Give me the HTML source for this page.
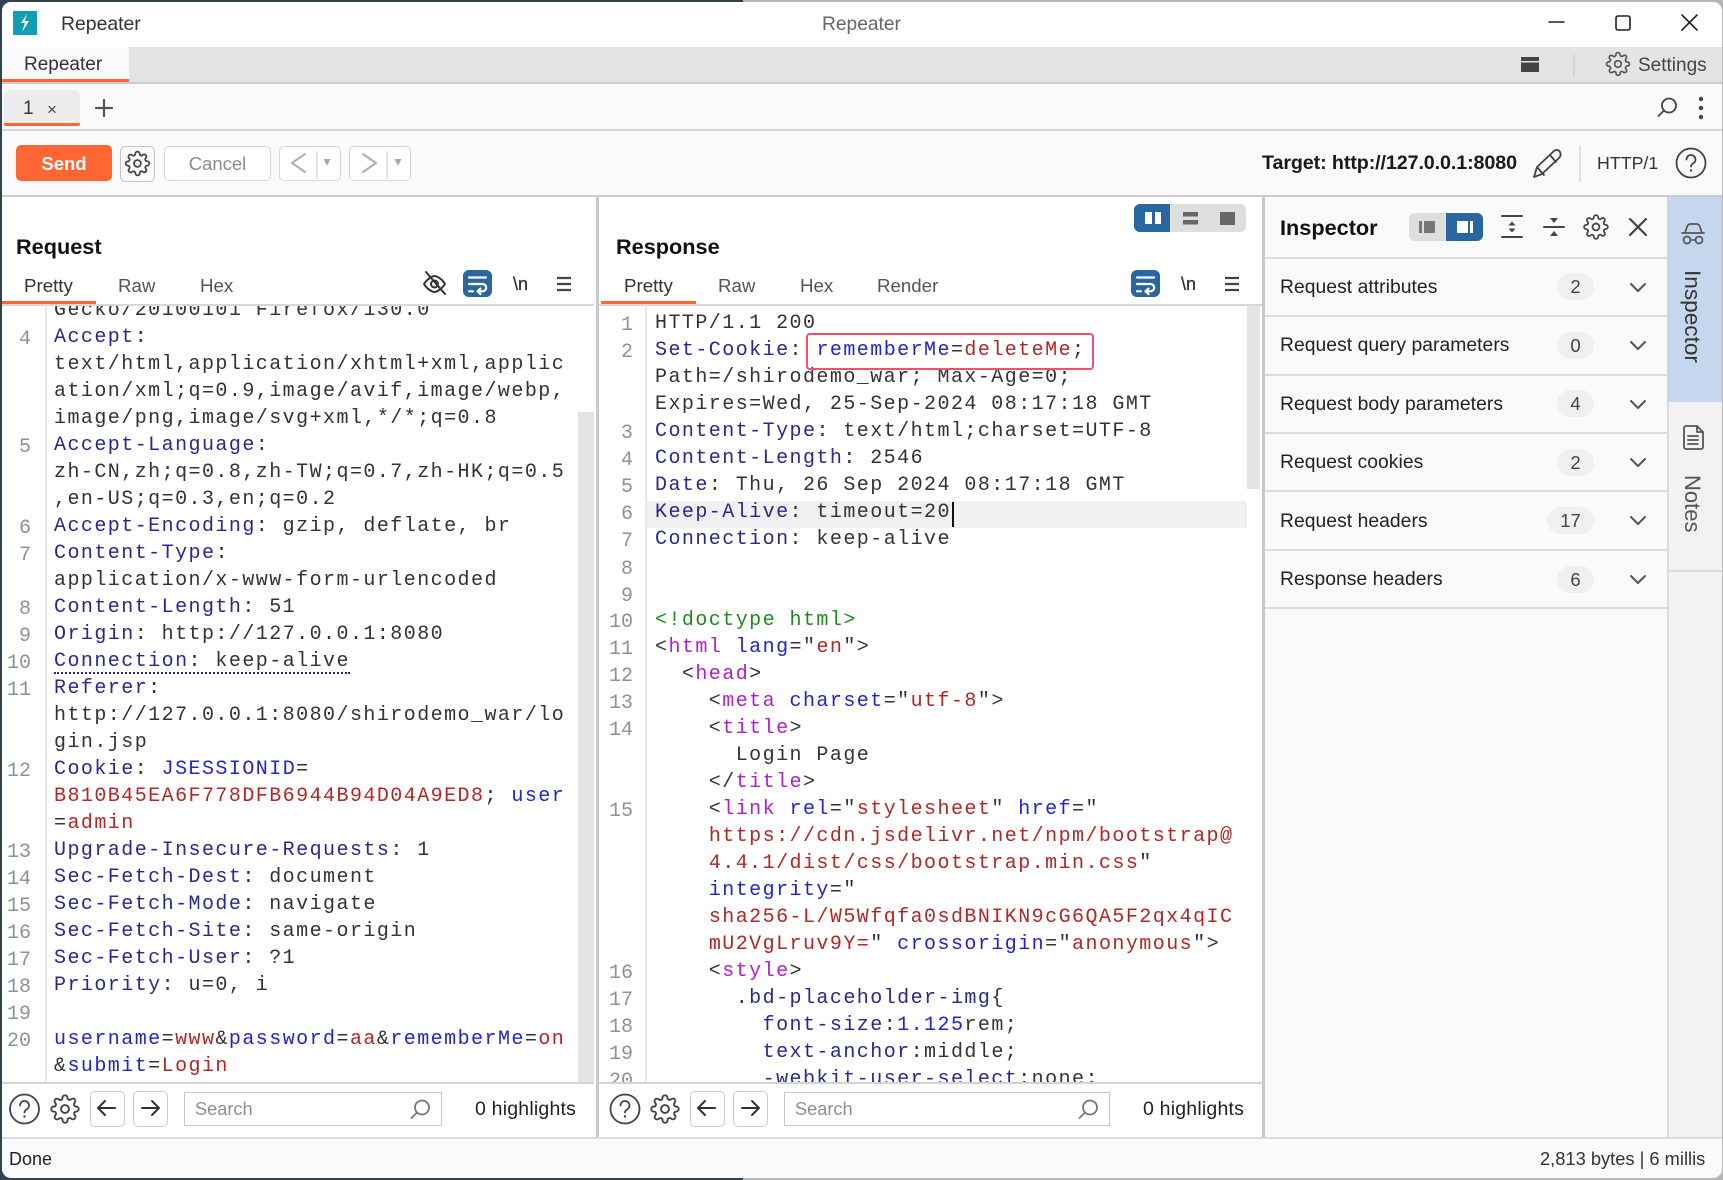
<!DOCTYPE html>
<html lang="en"><head><meta charset="utf-8"><title>Repeater</title>
<style>
html,body{margin:0;padding:0;width:1723px;height:1180px;overflow:hidden;background:#b5b5b5}
#dark1{position:absolute;left:0;top:0;width:743px;height:3px;background:#33424f}
#dark2{position:absolute;left:0;top:1176px;width:743px;height:4px;background:#33424f}
#dark3{position:absolute;left:0;top:0;width:10px;height:1180px;background:#33424f}
#w{position:absolute;left:2px;top:2px;width:1720px;height:1176px;border-radius:9px;background:#fafafa;overflow:hidden;filter:blur(.35px)}
#in{position:absolute;left:-2px;top:-2px;width:1723px;height:1180px;font-family:"Liberation Sans",sans-serif;color:#222}
.r{position:absolute}
.t{position:absolute;white-space:nowrap;line-height:30px;height:30px}
.code{position:absolute;overflow:hidden;background:#fff;font-family:"Liberation Mono",monospace;font-size:20px;letter-spacing:1.45px;color:#333}
.l{position:absolute;left:0;height:27px;line-height:27px;white-space:pre;margin-top:1.5px}
.n{position:absolute;color:#8b9298;font-size:20px;letter-spacing:0;width:40px;text-align:right;height:27px;line-height:27px;font-family:"Liberation Mono",monospace;margin-top:3px}
.h{color:#28288f}.b{color:#2323d2}.d{color:#b32626}.m{color:#b01ed2}.g{color:#1f8a1f}
.tab{font-size:18.7px;color:#555}
.ins{font-size:19.3px;letter-spacing:.05px;color:#222;left:1280px}
.bd{position:absolute;height:27px;line-height:27px;border-radius:14px;background:#f0f0f0;font-size:18.5px;color:#444;text-align:center}
svg{position:absolute;left:0;top:0}
</style></head><body>
<div id="dark1"></div><div id="dark2"></div><div id="dark3"></div>
<div id="w"><div id="in">

<!-- title bar -->
<div class="r" style="left:0;top:0;width:1723px;height:47px;background:#fff"></div>
<div class="t" style="left:61px;top:9px;font-size:19.4px;color:#333">Repeater</div>
<div class="t" style="left:822px;top:10px;font-size:19.2px;color:#666">Repeater</div>

<!-- tab bar -->
<div class="r" style="left:0;top:47px;width:1723px;height:35px;background:#e4e4e4;border-bottom:2px solid #ccc"></div>
<div class="r" style="left:0;top:47px;width:129px;height:32px;background:#fafafa;border-bottom:3px solid #ff6633"></div>
<div class="t" style="left:24px;top:50px;font-size:19px;color:#333">Repeater</div>
<div class="t" style="left:1638px;top:51px;font-size:19px;color:#444">Settings</div>

<!-- sub tabs -->
<div class="r" style="left:0;top:129px;width:1723px;height:2px;background:#d6d6d6"></div>
<div class="r" style="left:4px;top:90px;width:76px;height:33px;background:#ececec;border-radius:6px 6px 2px 2px;border-bottom:3px solid #ff6633"></div>
<div class="t" style="left:23px;top:94px;font-size:19px;color:#333">1</div>
<div class="t" style="left:47px;top:95px;font-size:17px;color:#444">×</div>

<!-- toolbar -->
<div class="r" style="left:0;top:195px;width:1723px;height:2px;background:#ccc"></div>
<div class="r" style="left:16px;top:145px;width:96px;height:36px;background:#ff6633;border-radius:5px"></div>
<div class="t" style="left:16px;top:149px;width:96px;text-align:center;font-size:18.5px;font-weight:bold;color:#fff">Send</div>
<div class="r" style="left:120px;top:146px;width:33px;height:34px;border:1.5px solid #c4c4c4;border-radius:5px;background:#fafafa"></div>
<div class="r" style="left:164px;top:146px;width:105px;height:33px;border:1.5px solid #d8d8d8;border-radius:5px;background:#fff"></div>
<div class="t" style="left:164px;top:149px;width:107px;text-align:center;font-size:18.5px;color:#8c8c8c">Cancel</div>
<div class="r" style="left:279px;top:146px;width:60px;height:33px;border:1.5px solid #d8d8d8;border-radius:5px;background:#fff"></div>
<div class="r" style="left:349px;top:146px;width:60px;height:33px;border:1.5px solid #d8d8d8;border-radius:5px;background:#fff"></div>
<div class="t" style="left:1262px;top:148px;font-size:19.7px;font-weight:bold;color:#1a1a1a;letter-spacing:-.1px">Target: http://127.0.0.1:8080</div>
<div class="t" style="left:1597px;top:148px;font-size:17.8px;color:#333">HTTP/1</div>

<!-- main panels -->
<div class="r" style="left:0;top:197px;width:1262px;height:885px;background:#fff"></div>
<div class="r" style="left:596px;top:197px;width:3px;height:941px;background:#c9c9c9"></div>
<div class="r" style="left:1262px;top:197px;width:3px;height:941px;background:#c9c9c9"></div>

<!-- Request -->
<div class="t" style="left:16px;top:232px;font-size:21.7px;font-weight:bold;color:#111">Request</div>
<div class="t tab" style="left:24px;top:271px;color:#333">Pretty</div>
<div class="t tab" style="left:118px;top:271px">Raw</div>
<div class="t tab" style="left:200px;top:271px">Hex</div>
<div class="r" style="left:1px;top:301px;width:95px;height:3px;background:#ff6633"></div>
<div class="r" style="left:0;top:304px;width:594px;height:2px;background:#d8d8d8"></div>
<div class="t" style="left:513px;top:269px;font-size:18px;color:#333;-webkit-text-stroke:.3px #333">\n</div>

<div class="code" style="left:0;top:306px;width:578px;height:776px">
<div class="r" style="left:45px;top:0;width:2px;height:776px;background:#e8e8e8"></div>
<div class="l" style="left:54px;top:-10.5px">Gecko/20100101 Firefox/130.0</div>
<div class="n" style="left:-9px;top:16.5px">4</div><div class="l" style="left:54px;top:16.5px"><span class="h">Accept</span>:</div>
<div class="l" style="left:54px;top:43.5px">text/html,application/xhtml+xml,applic</div>
<div class="l" style="left:54px;top:70.5px">ation/xml;q=0.9,image/avif,image/webp,</div>
<div class="l" style="left:54px;top:97.5px">image/png,image/svg+xml,*/*;q=0.8</div>
<div class="n" style="left:-9px;top:124.5px">5</div><div class="l" style="left:54px;top:124.5px"><span class="h">Accept-Language</span>:</div>
<div class="l" style="left:54px;top:151.5px">zh-CN,zh;q=0.8,zh-TW;q=0.7,zh-HK;q=0.5</div>
<div class="l" style="left:54px;top:178.5px">,en-US;q=0.3,en;q=0.2</div>
<div class="n" style="left:-9px;top:205.5px">6</div><div class="l" style="left:54px;top:205.5px"><span class="h">Accept-Encoding</span>: gzip, deflate, br</div>
<div class="n" style="left:-9px;top:232.5px">7</div><div class="l" style="left:54px;top:232.5px"><span class="h">Content-Type</span>:</div>
<div class="l" style="left:54px;top:259.5px">application/x-www-form-urlencoded</div>
<div class="n" style="left:-9px;top:286.5px">8</div><div class="l" style="left:54px;top:286.5px"><span class="h">Content-Length</span>: 51</div>
<div class="n" style="left:-9px;top:313.5px">9</div><div class="l" style="left:54px;top:313.5px"><span class="h">Origin</span>: http://127.0.0.1:8080</div>
<div class="n" style="left:-9px;top:340.5px">10</div><div class="l" style="left:54px;top:340.5px;height:23.500px;border-bottom:2px dotted #2323a0"><span class="h">Connection</span>: keep-alive</div>
<div class="n" style="left:-9px;top:367.5px">11</div><div class="l" style="left:54px;top:367.5px"><span class="h">Referer</span>:</div>
<div class="l" style="left:54px;top:394.5px">http://127.0.0.1:8080/shirodemo_war/lo</div>
<div class="l" style="left:54px;top:421.5px">gin.jsp</div>
<div class="n" style="left:-9px;top:448.5px">12</div><div class="l" style="left:54px;top:448.5px"><span class="h">Cookie</span>: <span class="b">JSESSIONID</span>=</div>
<div class="l" style="left:54px;top:475.5px"><span class="d">B810B45EA6F778DFB6944B94D04A9ED8</span>; <span class="b">user</span></div>
<div class="l" style="left:54px;top:502.5px">=<span class="d">admin</span></div>
<div class="n" style="left:-9px;top:529.5px">13</div><div class="l" style="left:54px;top:529.5px"><span class="h">Upgrade-Insecure-Requests</span>: 1</div>
<div class="n" style="left:-9px;top:556.5px">14</div><div class="l" style="left:54px;top:556.5px"><span class="h">Sec-Fetch-Dest</span>: document</div>
<div class="n" style="left:-9px;top:583.5px">15</div><div class="l" style="left:54px;top:583.5px"><span class="h">Sec-Fetch-Mode</span>: navigate</div>
<div class="n" style="left:-9px;top:610.5px">16</div><div class="l" style="left:54px;top:610.5px"><span class="h">Sec-Fetch-Site</span>: same-origin</div>
<div class="n" style="left:-9px;top:637.5px">17</div><div class="l" style="left:54px;top:637.5px"><span class="h">Sec-Fetch-User</span>: ?1</div>
<div class="n" style="left:-9px;top:664.5px">18</div><div class="l" style="left:54px;top:664.5px"><span class="h">Priority</span>: u=0, i</div>
<div class="n" style="left:-9px;top:691.5px">19</div>
<div class="n" style="left:-9px;top:718.5px">20</div><div class="l" style="left:54px;top:718.5px"><span class="b">username</span>=<span class="d">www</span>&amp;<span class="b">password</span>=<span class="d">aa</span>&amp;<span class="b">rememberMe</span>=<span class="d">on</span></div>
<div class="l" style="left:54px;top:745.5px">&amp;<span class="b">submit</span>=<span class="d">Login</span></div>
</div>
<div class="r" style="left:578px;top:412px;width:16px;height:670px;background:#e4e4e4"></div>

<!-- Response -->
<div class="t" style="left:616px;top:232px;font-size:21.7px;font-weight:bold;color:#111">Response</div>
<div class="t tab" style="left:624px;top:271px;color:#333">Pretty</div>
<div class="t tab" style="left:718px;top:271px">Raw</div>
<div class="t tab" style="left:800px;top:271px">Hex</div>
<div class="t tab" style="left:877px;top:271px">Render</div>
<div class="r" style="left:601px;top:301px;width:95px;height:3px;background:#ff6633"></div>
<div class="r" style="left:599px;top:304px;width:663px;height:2px;background:#d8d8d8"></div>
<div class="t" style="left:1181px;top:269px;font-size:18px;color:#333;-webkit-text-stroke:.3px #333">\n</div>
<div class="r" style="left:1134px;top:204px;width:112px;height:28px;background:#dedede;border-radius:6px"></div>
<div class="r" style="left:1134px;top:204px;width:36px;height:28px;background:#2a66a0;border-radius:6px 0 0 6px"></div>

<div class="code" style="left:599px;top:306px;width:648px;height:776px">
<div class="r" style="left:46px;top:0;width:2px;height:776px;background:#e8e8e8"></div>
<div class="r" style="left:48px;top:194.5px;width:600px;height:27px;background:#f0f0f0"></div>
<div class="n" style="left:-6px;top:2.5px">1</div><div class="l" style="left:56px;top:2.5px">HTTP/1.1 200</div>
<div class="n" style="left:-6px;top:29.5px">2</div><div class="l" style="left:56px;top:29.5px"><span class="h">Set-Cookie</span>: <span class="b">rememberMe</span>=<span class="d">deleteMe</span>;</div>
<div class="l" style="left:56px;top:56.5px">Path=/shirodemo_war; Max-Age=0;</div>
<div class="l" style="left:56px;top:83.5px">Expires=Wed, 25-Sep-2024 08:17:18 GMT</div>
<div class="n" style="left:-6px;top:110.5px">3</div><div class="l" style="left:56px;top:110.5px"><span class="h">Content-Type</span>: text/html;charset=UTF-8</div>
<div class="n" style="left:-6px;top:137.5px">4</div><div class="l" style="left:56px;top:137.5px"><span class="h">Content-Length</span>: 2546</div>
<div class="n" style="left:-6px;top:164.5px">5</div><div class="l" style="left:56px;top:164.5px"><span class="h">Date</span>: Thu, 26 Sep 2024 08:17:18 GMT</div>
<div class="n" style="left:-6px;top:191.5px">6</div><div class="l" style="left:56px;top:191.5px"><span class="h">Keep-Alive</span>: timeout=20</div>
<div class="r" style="left:353px;top:196px;width:2px;height:25px;background:#111"></div>
<div class="n" style="left:-6px;top:218.5px">7</div><div class="l" style="left:56px;top:218.5px"><span class="h">Connection</span>: keep-alive</div>
<div class="n" style="left:-6px;top:246.5px">8</div>
<div class="n" style="left:-6px;top:273.5px">9</div>
<div class="n" style="left:-6px;top:299.5px">10</div><div class="l" style="left:56px;top:299.5px"><span class="g">&lt;!doctype html&gt;</span></div>
<div class="n" style="left:-6px;top:326.5px">11</div><div class="l" style="left:56px;top:326.5px">&lt;<span class="m">html</span> <span class="b">lang</span>="<span class="d">en</span>"&gt;</div>
<div class="n" style="left:-6px;top:353.5px">12</div><div class="l" style="left:56px;top:353.5px">  &lt;<span class="m">head</span>&gt;</div>
<div class="n" style="left:-6px;top:380.5px">13</div><div class="l" style="left:56px;top:380.5px">    &lt;<span class="m">meta</span> <span class="b">charset</span>="<span class="d">utf-8</span>"&gt;</div>
<div class="n" style="left:-6px;top:407.5px">14</div><div class="l" style="left:56px;top:407.5px">    &lt;<span class="m">title</span>&gt;</div>
<div class="l" style="left:56px;top:434.5px">      Login Page</div>
<div class="l" style="left:56px;top:461.5px">    &lt;/<span class="m">title</span>&gt;</div>
<div class="n" style="left:-6px;top:488.5px">15</div><div class="l" style="left:56px;top:488.5px">    &lt;<span class="m">link</span> <span class="b">rel</span>="<span class="d">stylesheet</span>" <span class="b">href</span>="</div>
<div class="l" style="left:56px;top:515.5px">    <span class="d">https://cdn.jsdelivr.net/npm/bootstrap@</span></div>
<div class="l" style="left:56px;top:542.5px">    <span class="d">4.4.1/dist/css/bootstrap.min.css</span>"</div>
<div class="l" style="left:56px;top:569.5px">    <span class="b">integrity</span>="</div>
<div class="l" style="left:56px;top:596.5px">    <span class="d">sha256-L/W5Wfqfa0sdBNIKN9cG6QA5F2qx4qIC</span></div>
<div class="l" style="left:56px;top:623.5px">    <span class="d">mU2VgLruv9Y=</span>" <span class="b">crossorigin</span>="<span class="d">anonymous</span>"&gt;</div>
<div class="n" style="left:-6px;top:650.5px">16</div><div class="l" style="left:56px;top:650.5px">    &lt;<span class="m">style</span>&gt;</div>
<div class="n" style="left:-6px;top:677.5px">17</div><div class="l" style="left:56px;top:677.5px">      <span class="h">.bd-placeholder-img</span>{</div>
<div class="n" style="left:-6px;top:704.5px">18</div><div class="l" style="left:56px;top:704.5px">        <span class="h">font-size</span>:<span class="b">1.125</span>rem;</div>
<div class="n" style="left:-6px;top:731.5px">19</div><div class="l" style="left:56px;top:731.5px">        <span class="h">text-anchor</span>:middle;</div>
<div class="n" style="left:-6px;top:758.5px">20</div><div class="l" style="left:56px;top:758.5px">        <span class="h">-webkit-user-select</span>:none;</div>
</div>
<div class="r" style="left:1247px;top:306px;width:13px;height:183px;background:#e4e4e4"></div>
<div class="r" style="left:806px;top:333px;width:284px;height:33px;border:2.5px solid #f0506e;border-radius:4px"></div>

<!-- bottom bars -->
<div class="r" style="left:0;top:1082px;width:594px;height:2px;background:#d4d4d4"></div>
<div class="r" style="left:599px;top:1082px;width:663px;height:2px;background:#d4d4d4"></div>
<div class="r" style="left:0;top:1084px;width:596px;height:53px;background:#fff"></div>
<div class="r" style="left:599px;top:1084px;width:663px;height:53px;background:#fff"></div>
<div class="r" style="left:90px;top:1091px;width:33px;height:34px;border:1.5px solid #ccc;border-radius:5px"></div>
<div class="r" style="left:133px;top:1091px;width:33px;height:34px;border:1.5px solid #ccc;border-radius:5px"></div>
<div class="r" style="left:184px;top:1092px;width:256px;height:32px;border:1.5px solid #c8c8c8"></div>
<div class="t" style="left:195px;top:1094px;font-size:18.2px;color:#8f8f8f">Search</div>
<div class="t" style="left:475px;top:1094px;font-size:19.5px;letter-spacing:.2px;color:#222">0 highlights</div>
<div class="r" style="left:690px;top:1091px;width:33px;height:34px;border:1.5px solid #ccc;border-radius:5px"></div>
<div class="r" style="left:733px;top:1091px;width:33px;height:34px;border:1.5px solid #ccc;border-radius:5px"></div>
<div class="r" style="left:784px;top:1092px;width:324px;height:32px;border:1.5px solid #c8c8c8"></div>
<div class="t" style="left:795px;top:1094px;font-size:18.2px;color:#8f8f8f">Search</div>
<div class="t" style="left:1143px;top:1094px;font-size:19.5px;letter-spacing:.2px;color:#222">0 highlights</div>

<!-- Inspector -->
<div class="t" style="left:1280px;top:213px;font-size:21.7px;font-weight:bold;color:#111">Inspector</div>
<div class="r" style="left:1409px;top:213px;width:74px;height:28px;background:#dedede;border-radius:6px"></div>
<div class="r" style="left:1446px;top:213px;width:37px;height:28px;background:#2a66a0;border-radius:0 6px 6px 0"></div>
<div class="r" style="left:1265px;top:257px;width:402px;height:2px;background:#dcdcdc"></div>
<div class="r" style="left:1265px;top:315px;width:402px;height:2px;background:#dcdcdc"></div>
<div class="r" style="left:1265px;top:374px;width:402px;height:2px;background:#dcdcdc"></div>
<div class="r" style="left:1265px;top:432px;width:402px;height:2px;background:#dcdcdc"></div>
<div class="r" style="left:1265px;top:490px;width:402px;height:2px;background:#dcdcdc"></div>
<div class="r" style="left:1265px;top:549px;width:402px;height:2px;background:#dcdcdc"></div>
<div class="r" style="left:1265px;top:607px;width:402px;height:2px;background:#dcdcdc"></div>
<div class="t ins" style="top:272.5px">Request attributes</div>
<div class="t ins" style="top:331px">Request query parameters</div>
<div class="t ins" style="top:389.5px">Request body parameters</div>
<div class="t ins" style="top:448px">Request cookies</div>
<div class="t ins" style="top:506.5px">Request headers</div>
<div class="t ins" style="top:565px">Response headers</div>
<div class="bd" style="left:1557px;top:273px;width:37px">2</div>
<div class="bd" style="left:1557px;top:332px;width:37px">0</div>
<div class="bd" style="left:1557px;top:390px;width:37px">4</div>
<div class="bd" style="left:1557px;top:449px;width:37px">2</div>
<div class="bd" style="left:1547px;top:507px;width:47px">17</div>
<div class="bd" style="left:1557px;top:566px;width:37px">6</div>

<!-- side tabs -->
<div class="r" style="left:1667px;top:197px;width:56px;height:940px;background:#f3f1f3;border-left:2px solid #dcdcdc;box-sizing:border-box"></div>
<div class="r" style="left:1667px;top:197px;width:56px;height:205px;background:#c5d7ee"></div>
<div class="r" style="left:1669px;top:570px;width:54px;height:2px;background:#dcdcdc"></div>
<div class="t" style="left:1692px;top:270px;font-size:22.6px;color:#333;transform-origin:0 0;transform:rotate(90deg) translateY(-15px)">Inspector</div>
<div class="t" style="left:1692px;top:475px;font-size:22px;color:#555;transform-origin:0 0;transform:rotate(90deg) translateY(-15px)">Notes</div>

<!-- status bar -->
<div class="r" style="left:0;top:1137px;width:1723px;height:2px;background:#dcdcdc"></div>
<div class="t" style="left:9px;top:1144px;font-size:18px;color:#222">Done</div>
<div class="t" style="left:1540px;top:1144px;font-size:18.3px;color:#333">2,813 bytes | 6 millis</div>

<svg width="1723" height="1180" viewBox="0 0 1723 1180" fill="none" stroke-linecap="round" stroke-linejoin="round">
<defs>
<g id="gear" fill="none"><path d="M12 15.2a3.2 3.2 0 1 0 0-6.4 3.2 3.2 0 0 0 0 6.4z"/><path d="M19.4 15a1.65 1.65 0 0 0 .33 1.82l.06.06a2 2 0 0 1 0 2.83 2 2 0 0 1-2.83 0l-.06-.06a1.65 1.65 0 0 0-1.82-.33 1.65 1.65 0 0 0-1 1.51V21a2 2 0 0 1-2 2 2 2 0 0 1-2-2v-.09A1.65 1.65 0 0 0 9 19.4a1.65 1.65 0 0 0-1.82.33l-.06.06a2 2 0 0 1-2.83 0 2 2 0 0 1 0-2.83l.06-.06a1.65 1.65 0 0 0 .33-1.82 1.65 1.65 0 0 0-1.51-1H3a2 2 0 0 1-2-2 2 2 0 0 1 2-2h.09A1.65 1.65 0 0 0 4.6 9a1.65 1.65 0 0 0-.33-1.82l-.06-.06a2 2 0 0 1 0-2.83 2 2 0 0 1 2.83 0l.06.06a1.65 1.65 0 0 0 1.82.33H9a1.65 1.65 0 0 0 1-1.51V3a2 2 0 0 1 2-2 2 2 0 0 1 2 2v.09a1.65 1.65 0 0 0 1 1.51 1.65 1.65 0 0 0 1.82-.33l.06-.06a2 2 0 0 1 2.83 0 2 2 0 0 1 0 2.83l-.06.06a1.65 1.65 0 0 0-.33 1.82V9a1.65 1.65 0 0 0 1.51 1H21a2 2 0 0 1 2 2 2 2 0 0 1-2 2h-.09a1.65 1.65 0 0 0-1.51 1z"/></g>
<g id="help"><circle cx="16" cy="16" r="14.5" stroke-width="1.8"/><path d="M11.500 12.500a4.500 4.500 0 1 1 6.700 3.900c-1.400.8-2.200 1.500-2.200 3.100" stroke-width="1.8"/><circle cx="16" cy="23.500" r="1.200" fill="#444" stroke="none"/></g>
<g id="mag"><circle cx="12" cy="8.500" r="7" stroke-width="1.800"/><path d="M7 13.500L1.500 19" stroke-width="1.800"/></g>
<g id="chev"><path d="M-7 -4L0 3L7 -4" stroke-width="2"/></g>
<g id="wrap"><rect width="29" height="27" rx="6" fill="#2a66a0" stroke="none"/><path d="M6 7.500h17M6 14h13.500a3.500 3.500 0 0 1 0 7.300H15M17.500 18.500l-3 2.800 3 2.800M6 21.300h4" stroke="#fff" stroke-width="2.200"/></g>
<g id="ham"><path d="M0 0h14M0 6h14M0 12h14" stroke="#444" stroke-width="2.200" stroke-linecap="butt"/></g>
</defs>

<!-- logo -->
<rect x="13" y="11" width="24" height="24" fill="#0f9fb5"/>
<path d="M27 14l-6 9h4l-3 9 7-11h-4l2-7z" fill="#fff"/>

<!-- window controls -->
<path d="M1549 22h15" stroke="#222" stroke-width="1.6"/>
<rect x="1616" y="16" width="14" height="14" rx="2" stroke="#222" stroke-width="1.6"/>
<path d="M1682 15l15 15M1697 15l-15 15" stroke="#222" stroke-width="1.6"/>

<!-- tab bar right -->
<rect x="1521" y="57" width="18" height="4" fill="#444"/><rect x="1521" y="62.500" width="18" height="9.500" fill="#444"/>
<path d="M1574 55v20" stroke="#d0d0d0" stroke-width="1.500"/>
<use href="#gear" transform="translate(1605.500,51.500) scale(1.040)" stroke="#555" stroke-width="1.600"/>

<!-- subtab -->
<path d="M104 100v16M96 108h16" stroke="#555" stroke-width="2.200"/>
<use href="#mag" transform="translate(1657,97)" stroke="#444"/>
<circle cx="1701" cy="99" r="2.200" fill="#444"/><circle cx="1701" cy="108" r="2.200" fill="#444"/><circle cx="1701" cy="117" r="2.200" fill="#444"/>

<!-- toolbar icons -->
<use href="#gear" transform="translate(124.500,150.500) scale(1.080)" stroke="#444" stroke-width="1.600"/>
<path d="M305 154l-13 9 13 9" stroke="#b0b0b0" stroke-width="2"/>
<path d="M317 152v26" stroke="#dcdcdc" stroke-width="1.500"/>
<path d="M323.500 159h7l-3.500 7z" fill="#aaa"/>
<path d="M363 154l13 9-13 9" stroke="#b0b0b0" stroke-width="2"/>
<path d="M387 152v26" stroke="#dcdcdc" stroke-width="1.500"/>
<path d="M394.500 159h7l-3.500 7z" fill="#aaa"/>
<path d="M1534 177l3-10 17-16c2-2 5-1 6 1s1 4-1 6l-17 16z M1537 167l7 8M1550 155l6 7" stroke="#444" stroke-width="1.800"/>
<path d="M1580 146v35" stroke="#d8d8d8" stroke-width="1.500"/>
<use href="#help" transform="translate(1675,147)" stroke="#444"/>

<!-- request icons -->
<path d="M424 284c4-6 9-8 10.500-8s7 2 10.500 8c-4 6-9 8-10.500 8s-7-2-10.500-8z" stroke="#333" stroke-width="2"/>
<circle cx="434.500" cy="284" r="3.500" stroke="#333" stroke-width="2"/>
<path d="M426 272l19 22" stroke="#333" stroke-width="2"/>
<use href="#wrap" x="463" y="270"/>
<use href="#ham" x="557" y="278"/>

<!-- response icons -->
<use href="#wrap" x="1131" y="270"/>
<use href="#ham" x="1225" y="278"/>
<rect x="1145" y="212" width="7" height="12" fill="#fff"/><rect x="1155" y="212" width="6" height="12" fill="#fff"/>
<rect x="1183" y="212" width="15" height="4.500" fill="#666"/><rect x="1183" y="220" width="15" height="4.500" fill="#666"/>
<rect x="1220" y="212" width="15" height="13" fill="#666"/>

<!-- bottom icons request -->
<use href="#help" transform="translate(8.500,1093)" stroke="#444"/>
<use href="#gear" transform="translate(50,1094) scale(1.250)" stroke="#444" stroke-width="1.500"/>
<path d="M115 1108h-17M105 1101l-7 7 7 7" stroke="#333" stroke-width="2"/>
<path d="M142 1108h17M152 1101l7 7-7 7" stroke="#333" stroke-width="2"/>
<use href="#mag" transform="translate(410,1099)" stroke="#777"/>
<!-- bottom icons response -->
<use href="#help" transform="translate(609,1093)" stroke="#444"/>
<use href="#gear" transform="translate(650,1094) scale(1.250)" stroke="#444" stroke-width="1.500"/>
<path d="M715 1108h-17M705 1101l-7 7 7 7" stroke="#333" stroke-width="2"/>
<path d="M742 1108h17M752 1101l7 7-7 7" stroke="#333" stroke-width="2"/>
<use href="#mag" transform="translate(1078,1099)" stroke="#777"/>

<!-- inspector icons -->
<rect x="1419" y="221" width="3" height="12" fill="#777"/><rect x="1424" y="221" width="11" height="12" fill="#777"/>
<rect x="1457" y="221" width="11" height="12" fill="#fff"/><rect x="1470" y="221" width="3" height="12" fill="#fff"/>
<path d="M1502 216h20M1502 237h20" stroke="#444" stroke-width="2"/>
<path d="M1512 221.500l3.500 4h-7zM1512 232.500l3.500-4h-7z" fill="#444"/>
<path d="M1544 227h20" stroke="#444" stroke-width="2"/>
<path d="M1554 223l4-5h-8zM1554 231l4 5h-8z" fill="#444"/>
<use href="#gear" transform="translate(1583,214) scale(1.080)" stroke="#444" stroke-width="1.600"/>
<path d="M1630 219l16 16M1646 219l-16 16" stroke="#444" stroke-width="2.200"/>
<use href="#chev" x="1638" y="288" stroke="#555"/>
<use href="#chev" x="1638" y="346" stroke="#555"/>
<use href="#chev" x="1638" y="405" stroke="#555"/>
<use href="#chev" x="1638" y="463" stroke="#555"/>
<use href="#chev" x="1638" y="521" stroke="#555"/>
<use href="#chev" x="1638" y="580" stroke="#555"/>

<!-- side icons -->
<path d="M1682 233h22M1685 233l2-6c.5-2 2-3 3-3h7c1 0 2.500 1 3 3l2 6" stroke="#555" stroke-width="1.700"/>
<circle cx="1687" cy="240" r="3.500" stroke="#555" stroke-width="1.700"/><circle cx="1699" cy="240" r="3.500" stroke="#555" stroke-width="1.700"/>
<path d="M1691 240h4" stroke="#555" stroke-width="1.500"/>
<path d="M1686 426h11l6 6v15a2 2 0 0 1-2 2h-15a2 2 0 0 1-2-2v-19a2 2 0 0 1 2-2zM1697 426v6h6M1688 436h10M1688 440h10M1688 444h10" stroke="#555" stroke-width="1.800"/>
</svg>
</div></div>
</body></html>
